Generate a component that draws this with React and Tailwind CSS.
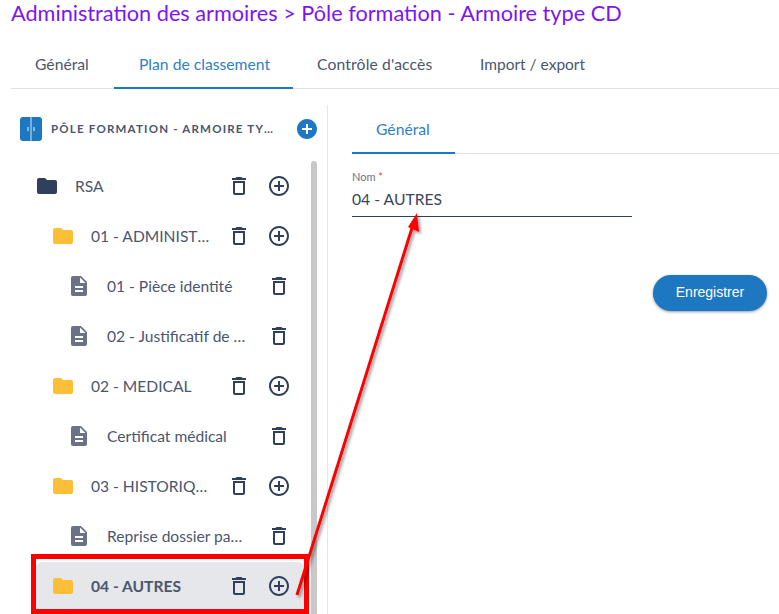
import React from "react";

const FOLDER = "M10 4H4c-1.1 0-1.99.9-1.99 2L2 18c0 1.1.9 2 2 2h16c1.1 0 2-.9 2-2V8c0-1.1-.9-2-2-2h-8l-2-2z";
const DOC = "M14 2H6c-1.1 0-1.99.9-1.99 2L4 20c0 1.1.89 2 1.99 2H18c1.1 0 2-.9 2-2V8l-6-6zm2 16H8v-2h8v2zm0-4H8v-2h8v2zm-3-5V3.5L18.5 9H13z";
const TRASH = "M6 19c0 1.1.9 2 2 2h8c1.1 0 2-.9 2-2V7H6v12zM8 9h8v10H8V9zm7.5-5l-1-1h-5l-1 1H5v2h14V4z";
const ADD_OUTLINE = "M13 7h-2v4H7v2h4v4h2v-4h4v-2h-4V7zm-1-5C6.48 2 2 6.48 2 12s4.48 10 10 10 10-4.48 10-10S17.52 2 12 2zm0 18c-4.41 0-8-3.59-8-8s3.59-8 8-8 8 3.59 8 8-3.59 8-8 8z";
const ADD_FILLED = "M12 2C6.48 2 2 6.48 2 12s4.48 10 10 10 10-4.48 10-10S17.52 2 12 2zm5 11h-4v4h-2v-4H7v-2h4V7h2v4h4v2z";

const Icon = ({ d, className }) => (
  <svg viewBox="0 0 24 24" className={`w-6 h-6 shrink-0 fill-current ${className || ""}`}>
    <path d={d} />
  </svg>
);

const rows = [
  { label: "RSA", type: "root" },
  { label: "01 - ADMINISTRATIF", type: "folder" },
  { label: "01 - Pièce identité", type: "doc" },
  { label: "02 - Justificatif de domicile", type: "doc" },
  { label: "02 - MEDICAL", type: "folder" },
  { label: "Certificat médical", type: "doc" },
  { label: "03 - HISTORIQUE", type: "folder" },
  { label: "Reprise dossier papier", type: "doc" },
  { label: "04 - AUTRES", type: "folder", active: true },
];

const TreeRow = ({ row }) => {
  const isDoc = row.type === "doc";
  const indent = row.type === "root" ? "pl-0" : row.type === "folder" ? "pl-[16px]" : "pl-[32px]";
  const iconColor = row.type === "root" ? "text-[#2f3f5c]" : isDoc ? "text-[#6b7288]" : "text-[#fdbf38]";

  return (
    <div className={`h-12 shrink-0 flex items-center rounded-md pr-[13px] ${indent} ${row.active ? "bg-[#e5e7eb]" : ""}`}>
      <Icon d={isDoc ? DOC : FOLDER} className={`-ml-px ${iconColor}`} />
      <span className={`flex-1 min-w-0 truncate ml-4 pt-0.5 text-[15.6px] text-[#4b566e] ${isDoc ? "pr-[19px]" : "pr-4"} ${row.active ? "font-bold" : ""}`}>
        {row.label}
      </span>
      <Icon d={TRASH} className="text-[#2f3f5c]" />
      {!isDoc && <Icon d={ADD_OUTLINE} className="ml-4 text-[#2f3f5c]" />}
    </div>
  );
};

const App = () => {
  return (
    <div className="relative w-[779px] h-[614px] overflow-hidden bg-white font-['Lato','Liberation_Sans',sans-serif]">
      <h1 className="pl-[11px] h-[39px] text-[21.7px] leading-[26px] font-normal text-[#7c14f5] whitespace-nowrap">
        Administration des armoires &gt; Pôle formation - Armoire type CD
      </h1>

      <div className="ml-[11px] h-[50px] flex border-b border-[#dfe1e6] text-[15.7px] text-[#4b566e]">
        <div className="w-[103px] pl-6 pt-[14px]">Général</div>
        <div className="w-[179px] pl-[25px] pt-[14px] border-b-2 border-[#1e77c1] h-[50px] text-[#2f80c6]">Plan de classement</div>
        <div className="w-[163px] pl-6 pt-[14px] tracking-[0.15px]">Contrôle d'accès</div>
        <div className="pl-[24px] pt-[14px] text-[15.5px]">Import / export</div>
      </div>

      <div className="flex h-[525px] mt-4">
        <div className="ml-[9px] w-[319px] shrink-0 border-r border-[#e5e7eb]">
          <div className="h-12 flex items-center pl-[11px]">
            <svg viewBox="0 0 22 24" className="w-[22px] h-6 shrink-0">
              <rect width="22" height="24" rx="3" fill="#1e77c1" />
              <rect x="10.2" width="1.6" height="24" fill="#8fbce0" />
              <rect x="7.4" y="10" width="1.2" height="4" fill="#cfe3f3" />
              <rect x="13.4" y="10" width="1.2" height="4" fill="#cfe3f3" />
            </svg>
            <span className="ml-[9px] w-[226px] truncate text-[11.5px] font-bold tracking-[1.2px] text-[#4b566e] uppercase">
              Pôle formation - Armoire type CD
            </span>
            <Icon d={ADD_FILLED} className="ml-[18px] text-[#1e77c1]" />
          </div>

          <div className="flex mt-[8px]">
            <div className="ml-[27px] w-[268px] flex flex-col gap-0.5 pt-px">
              {rows.map((row) => (
                <TreeRow key={row.label} row={row} />
              ))}
            </div>
            <div className="ml-[7px] w-1.5 h-[470px] rounded-t-full bg-[#c8c8c8]" />
          </div>
        </div>

        <div className="flex-1 pl-6">
          <div className="h-[49px] border-b border-[#dfe1e6] text-[15.7px]">
            <div className="w-[103px] h-[49px] pl-6 pt-[13px] border-b-2 border-[#1e77c1] text-[#2f80c6]">Général</div>
          </div>

          <div className="w-[280px] mt-4 border-b border-[#2f3f5c] pb-[7px]">
            <div className="text-[11px] leading-[14px] text-[#6b7288]">
              Nom <span className="text-[#e5484d]">*</span>
            </div>
            <div className="mt-[5px] text-[15.7px] leading-[20px] text-[#3a465f]">04 - AUTRES</div>
          </div>

          <div className="flex justify-end w-[415px] mt-[58px]">
            <button className="w-[114px] h-9 pb-0.5 rounded-full bg-[#1e77c1] text-white text-[14px] font-['Liberation_Sans',sans-serif] shadow-[0_1px_3px_rgba(0,0,0,0.4)]">
              Enregistrer
            </button>
          </div>
        </div>
      </div>

      {/* annotation posee sur la capture */}
      <div className="absolute left-[31px] top-[554px] w-[278px] h-[60px] border-[5px] border-[#ff0000]" />
      <svg className="absolute left-0 top-0 pointer-events-none" width="779" height="614">
        <defs>
          <filter id="arrowShadow" x="-20%" y="-20%" width="140%" height="140%">
            <feDropShadow dx="2" dy="2" stdDeviation="1.5" floodColor="#000" floodOpacity="0.4" />
          </filter>
        </defs>
        <g filter="url(#arrowShadow)">
          <line x1="297" y1="595" x2="412" y2="228" stroke="#ff0000" strokeWidth="3" />
          <polygon points="417,213 408,227 419,232" fill="#ff0000" />
        </g>
      </svg>
    </div>
  );
};

export default App;
